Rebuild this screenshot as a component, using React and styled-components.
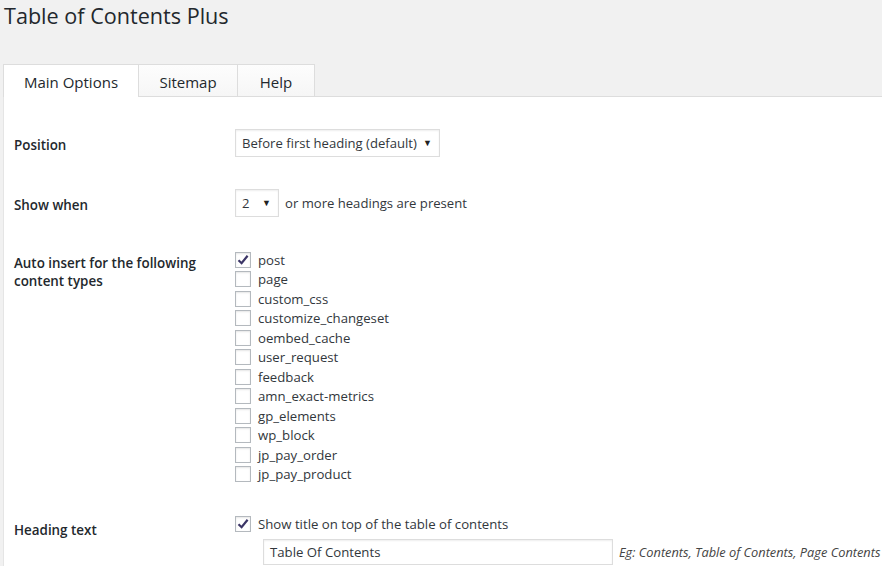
import React from 'react';
import styled, { createGlobalStyle } from 'styled-components';

const GlobalStyle = createGlobalStyle`
    body {
        margin: 0;
        background: #f1f1f1;
        font-family: "Open Sans", "Noto Sans", sans-serif;
        color: #23282d;
    }
`;

const Page = styled.div`
    width: 882px;
    height: 566px;
    overflow: hidden;
    padding-left: 3px;
    box-sizing: border-box;
`;

const Title = styled.h1`
    margin: 0;
    padding: 2px 0 0 1px;
    height: 64px;
    box-sizing: border-box;
    font-size: 21.6px;
    font-weight: 400;
    line-height: 28px;
    color: #23282d;
`;

const TabBar = styled.div`
    display: flex;
    align-items: flex-end;
    height: 33px;
    border-bottom: 1px solid #ddd;
    box-sizing: border-box;
`;

const Tab = styled.div`
    box-sizing: border-box;
    width: ${p => p.$w}px;
    height: ${p => (p.$active ? 33 : 32)}px;
    margin-bottom: ${p => (p.$active ? -1 : 0)}px;
    border: 1px solid #ddd;
    border-left-width: ${p => (p.$first ? 1 : 0)}px;
    border-bottom: 0;
    background: ${p => (p.$active ? '#fff' : 'linear-gradient(#fdfdfd, #f6f6f6)')};
    display: flex;
    align-items: center;
    justify-content: center;
    font-size: 15px;
    color: #23282d;
    padding-top: 2px;
`;

const Panel = styled.div`
    background: #fff;
    border-left: 1px solid #e5e5e5;
    padding: 16px 10px 0 10px;
    height: 500px;
`;

const Row = styled.div`
    display: grid;
    grid-template-columns: 221px 1fr;
    padding: 15px 0;
`;

const Label = styled.div`
    font-size: 13.4px;
    font-weight: 600;
    line-height: 18px;
    color: #23282d;
    padding-top: ${p => p.$top || 8}px;
    width: 195px;
`;

const Field = styled.div`
    display: flex;
    flex-direction: column;
    align-items: flex-start;
    font-size: 13.1px;
    color: #32373c;
`;

const Inline = styled.div`
    display: flex;
    align-items: center;
    gap: 6px;
    white-space: nowrap;
`;

const Select = styled.div`
    box-sizing: border-box;
    height: 28px;
    width: ${p => p.$w}px;
    margin: 1px 0;
    padding: 0 7px 0 6px;
    border: 1px solid #ddd;
    box-shadow: inset 0 1px 2px rgba(0, 0, 0, 0.07);
    background: #fff;
    display: flex;
    align-items: center;
    justify-content: space-between;
    font-size: 13.1px;
    color: #32373c;
    white-space: nowrap;
`;

const Arrow = styled.span`
    font-size: 9px;
    color: #222;
    margin-top: -2px;
`;

const List = styled.div`
    padding-top: 2px;
`;

const Item = styled.div`
    display: flex;
    align-items: center;
    gap: 7px;
    height: 19.5px;
    font-size: 13.2px;
    color: #32373c;
    white-space: nowrap;
`;

const Box = styled.span`
    box-sizing: border-box;
    width: 16px;
    height: 16px;
    border: 1px solid #b4b9be;
    background: #fff;
    box-shadow: inset 0 1px 2px rgba(0, 0, 0, 0.1);
    display: flex;
    align-items: center;
    justify-content: center;
`;

const TextInput = styled.div`
    box-sizing: border-box;
    width: 350px;
    height: 26px;
    margin: 5px 0 0 28px;
    padding: 0 6px;
    border: 1px solid #ddd;
    box-shadow: inset 0 1px 2px rgba(0, 0, 0, 0.07);
    display: flex;
    align-items: center;
    font-size: 13.2px;
    color: #32373c;
`;

const Hint = styled.span`
    font-size: 12.8px;
    font-style: italic;
    color: #444;
    margin-top: 5px;
`;

const Check = ({ on }) => (
    <Box>
        {on && (
            <svg width="14" height="14" viewBox="0 0 14 14">
                <path d="M2.5 7.2 L5.6 10.2 L11.6 2.8" fill="none" stroke="#3b3566" strokeWidth="2.2" strokeLinejoin="miter" />
            </svg>
        )}
    </Box>
);

const types = [
    'post', 'page', 'custom_css', 'customize_changeset', 'oembed_cache', 'user_request',
    'feedback', 'amn_exact-metrics', 'gp_elements', 'wp_block', 'jp_pay_order', 'jp_pay_product',
];

export default function App() {
    return (
        <Page>
            <GlobalStyle />
            <Title>Table of Contents Plus</Title>
            <TabBar>
                <Tab $w={136} $active $first>Main Options</Tab>
                <Tab $w={99}>Sitemap</Tab>
                <Tab $w={77}>Help</Tab>
            </TabBar>
            <Panel>
                <Row>
                    <Label>Position</Label>
                    <Field>
                        <Select $w={205}>Before first heading (default) <Arrow>▼</Arrow></Select>
                    </Field>
                </Row>
                <Row>
                    <Label>Show when</Label>
                    <Field>
                        <Inline>
                            <Select $w={44}>2 <Arrow>▼</Arrow></Select>
                            <span>or more headings are present</span>
                        </Inline>
                    </Field>
                </Row>
                <Row>
                    <Label $top={6}>Auto insert for the following content types</Label>
                    <Field>
                        <List>
                            {types.map((t, i) => (
                                <Item key={t}><Check on={i === 0} />{t}</Item>
                            ))}
                        </List>
                    </Field>
                </Row>
                <Row>
                    <Label $top={7}>Heading text</Label>
                    <Field>
                        <Item><Check on />Show title on top of the table of contents</Item>
                        <Inline>
                            <TextInput>Table Of Contents</TextInput>
                            <Hint>Eg: Contents, Table of Contents, Page Contents</Hint>
                        </Inline>
                    </Field>
                </Row>
            </Panel>
        </Page>
    );
}
